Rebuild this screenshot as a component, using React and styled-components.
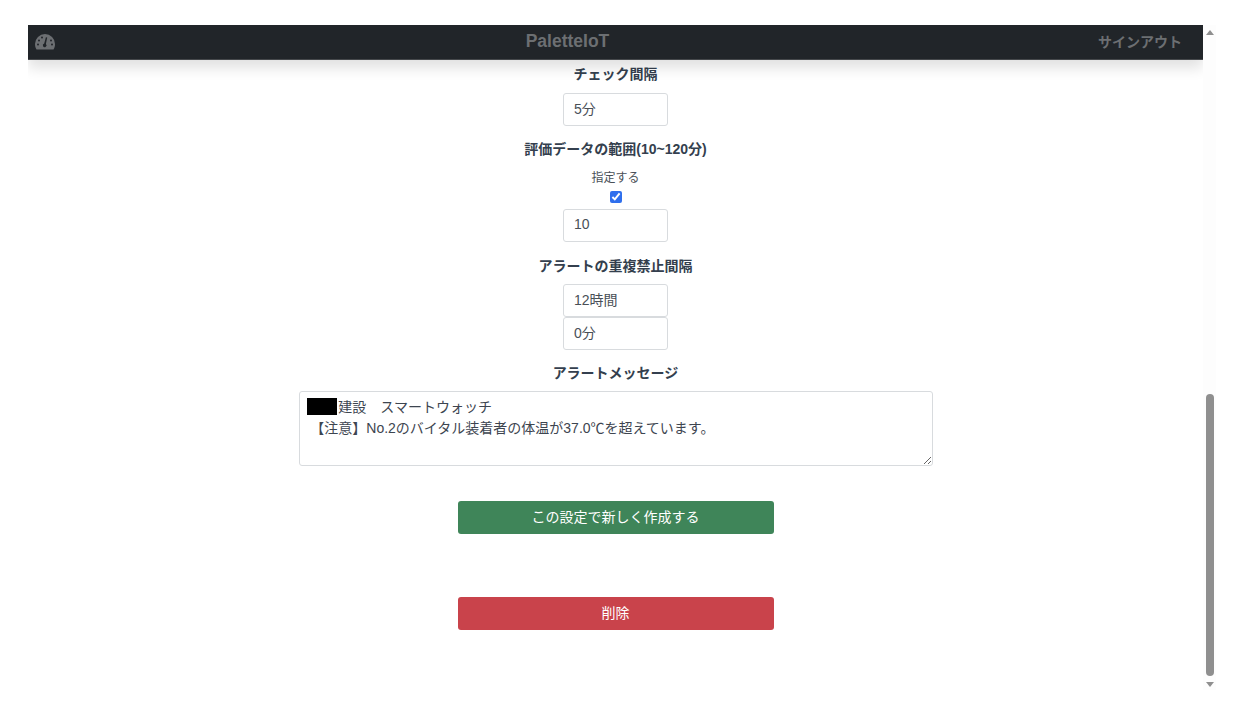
import React from 'react';
import styled, { createGlobalStyle } from 'styled-components';

const GlobalStyle = createGlobalStyle`
  html, body {
    margin: 0;
    height: 100%;
    background: #fff;
    overflow: hidden;
  }
  body {
    font-family: "Liberation Sans", "Noto Sans CJK JP", sans-serif;
    color: #2d3748;
  }
`;

const Frame = styled.div`
  display: flex;
  height: 706px;
  padding: 25px 38px 0 28px;
  box-sizing: border-box;
`;

const Page = styled.div`
  width: 1175px;
  display: flex;
  flex-direction: column;
`;

const Navbar = styled.header`
  flex: none;
  height: 35px;
  box-sizing: border-box;
  padding: 0 21px 1px 7px;
  display: flex;
  align-items: center;
  justify-content: space-between;
  background: #212529;
  border-bottom: 1px solid #45484b;
  color: #6c6f72;
  box-shadow: 0 8px 14px rgba(0, 0, 0, 0.12);
  clip-path: inset(0 0 -30px 0);
  font-weight: 700;
`;

const Brand = styled.span`
  font-size: 17.5px;
  margin-right: 18px;
`;

const SignOut = styled.span`
  font-size: 14px;
  margin-bottom: 2px;
`;

const Form = styled.main`
  display: flex;
  flex-direction: column;
  align-items: center;
  padding-top: 3px;
`;

const Label = styled.h3`
  margin: ${props => props.$top || 0}px 0 ${props => props.$bottom || 8}px;
  font-size: 14px;
  line-height: 22px;
  font-weight: 700;
  text-align: center;
  color: #343f4e;
`;

const Hint = styled.div`
  margin-top: 2px;
  font-size: 12px;
  line-height: 16px;
  color: #495057;
`;

const Check = styled.input`
  display: block;
  width: 12px;
  height: 12px;
  margin: 5px 0 6px;
  accent-color: #2f6fed;
`;

const Field = styled.input`
  display: block;
  width: 105px;
  height: 33px;
  box-sizing: border-box;
  padding: 0 10px 3px;
  border: 1px solid #d8dbde;
  border-radius: 3px;
  background: #fff;
  font: 14px "Liberation Sans", "Noto Sans CJK JP", sans-serif;
  color: #495057;
`;

const MessageBox = styled.div`
  position: relative;
  width: 634px;
  height: 75px;
`;

const Message = styled.textarea`
  display: block;
  width: 100%;
  height: 100%;
  box-sizing: border-box;
  padding: 5px 8px;
  border: 1px solid #d8dbde;
  border-radius: 3px;
  font: 14px/21px "Liberation Sans", "Noto Sans CJK JP", sans-serif;
  color: #3d4550;
  overflow: hidden;
`;

const Redaction = styled.span`
  position: absolute;
  left: 8px;
  top: 7px;
  width: 30px;
  height: 17px;
  background: #000;
`;

const ActionButton = styled.button`
  display: block;
  width: 316px;
  height: 33px;
  margin-top: ${props => props.$top}px;
  padding: 0 0 3px;
  border: 0;
  border-radius: 3px;
  background: ${props => props.$bg};
  color: #fff;
  font: 14px "Liberation Sans", "Noto Sans CJK JP", sans-serif;
`;

const Scrollbar = styled.div`
  flex: none;
  width: 13px;
  height: 665px;
  padding: 5px 0 3px;
  box-sizing: border-box;
  display: flex;
  flex-direction: column;
  align-items: center;
  background: #fdfdfd;
`;

const Arrow = styled.svg`
  flex: none;
  width: 8px;
  height: 5px;
  fill: #8f8f8f;
`;

const Track = styled.div`
  flex: 1;
  display: flex;
  flex-direction: column;
  justify-content: flex-end;
  padding-bottom: 6px;
`;

const Thumb = styled.div`
  width: 8px;
  height: 282px;
  border-radius: 4px;
  background: #8f8f8f;
`;

const GaugeIcon = () => (
  <svg width="20" height="18" viewBox="0 0 20 18" aria-hidden="true">
    <path
      fill="#6c6f72"
      fillRule="evenodd"
      d="M10 1a10 10 0 0 1 10 10c0 2-.5 4-1.500 5.500H1.500C.5 15 0 13 0 11A10 10 0 0 1 10 1Z"
    />
    <path fill="#212529" d="M12.200 4.500 10.900 11a1.800 1.800 0 1 1-1.700-.4l1.700-6.400Z" />
    <circle cx="4" cy="7.500" r="1" fill="#212529" />
    <circle cx="3" cy="11.500" r="1" fill="#212529" />
    <circle cx="7" cy="4.500" r="1" fill="#212529" />
    <circle cx="16" cy="7.500" r="1" fill="#212529" />
    <circle cx="17" cy="11.500" r="1" fill="#212529" />
  </svg>
);

const message = '\u3000\u3000\u2009建設　スマートウォッチ\n\u2009【注意】No.2のバイタル装着者の体温が37.0℃を超えています。';

const App = () => (
  <Frame>
    <GlobalStyle />
    <Page>
      <Navbar>
        <GaugeIcon />
        <Brand>PaletteIoT</Brand>
        <SignOut>サインアウト</SignOut>
      </Navbar>
      <Form>
        <Label>チェック間隔</Label>
        <Field defaultValue="5分" />
        <Label $top={12} $bottom={0}>評価データの範囲(10~120分)</Label>
        <Hint>指定する</Hint>
        <Check type="checkbox" defaultChecked />
        <Field defaultValue="10" />
        <Label $top={13} $bottom={7}>アラートの重複禁止間隔</Label>
        <Field defaultValue="12時間" />
        <Field defaultValue="0分" />
        <Label $top={12} $bottom={7}>アラートメッセージ</Label>
        <MessageBox>
          <Message defaultValue={message} />
          <Redaction />
        </MessageBox>
        <ActionButton $top={35} $bg="#3f8559">この設定で新しく作成する</ActionButton>
        <ActionButton $top={63} $bg="#c9434b">削除</ActionButton>
      </Form>
    </Page>
    <Scrollbar>
      <Arrow viewBox="0 0 8 5"><path d="M4 0 8 5H0Z" /></Arrow>
      <Track><Thumb /></Track>
      <Arrow viewBox="0 0 8 5"><path d="M0 0h8L4 5Z" /></Arrow>
    </Scrollbar>
  </Frame>
);

export default App;
